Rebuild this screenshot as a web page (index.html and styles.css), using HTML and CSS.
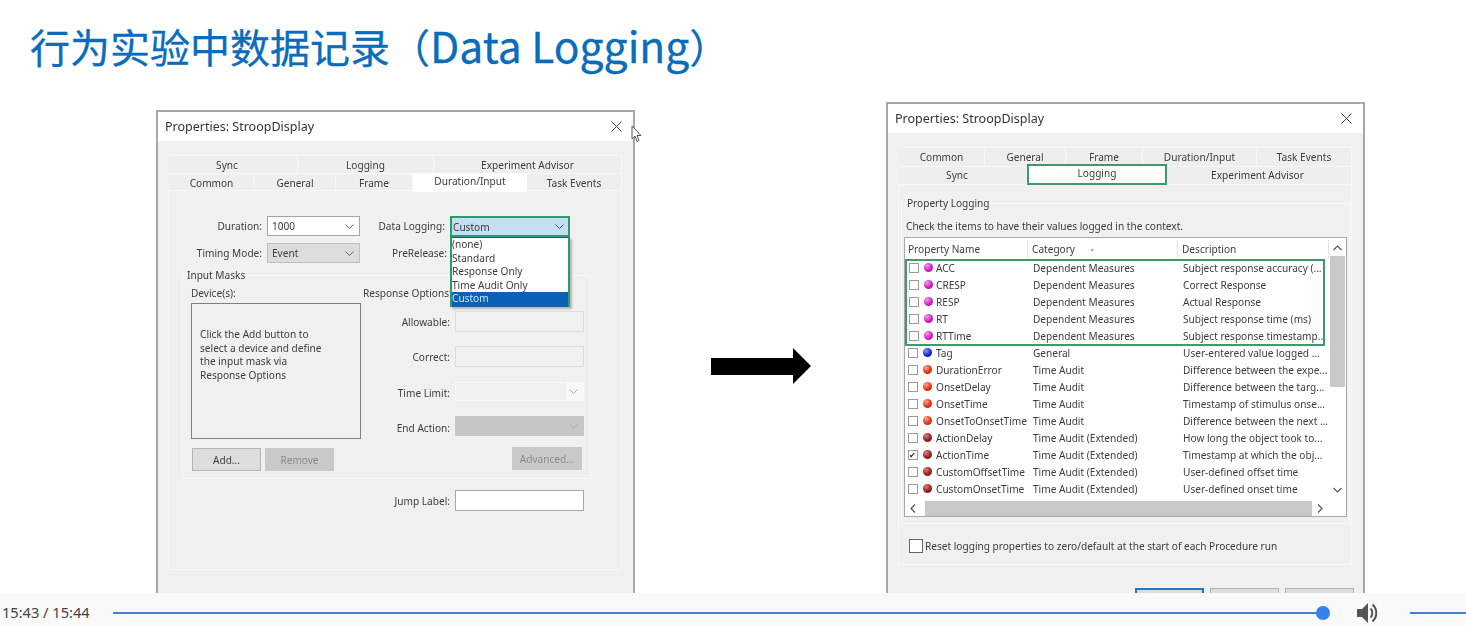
FILE: index.html
```html
<!DOCTYPE html>
<html lang="en">
<head>
  <meta charset="UTF-8">
  <title>Data Logging</title>
  <link rel="stylesheet" href="styles.css">
</head>
<body>
  <div class="slide">
    <h1 class="slide-title">行为实验中数据记录（<span class="title-latin">Data Logging</span>）</h1>

    <!-- left dialog: Duration/Input tab -->
    <div class="dialog dialog-left">
      <div class="dialog-title">
        <span>Properties: StroopDisplay</span>
        <svg class="close-icon" width="11" height="11" viewBox="0 0 11 11"><path d="M0.5 0.5L10.5 10.5M10.5 0.5L0.5 10.5" stroke="#444" fill="none"/></svg>
      </div>
      <div class="dialog-body">
        <div class="tabs">
          <div class="tab-row">
            <div class="tab w-sync">Sync</div>
            <div class="tab w-logging">Logging</div>
            <div class="tab w-advisor">Experiment Advisor</div>
          </div>
          <div class="tab-row">
            <div class="tab w-common">Common</div>
            <div class="tab w-general">General</div>
            <div class="tab w-frame">Frame</div>
            <div class="tab w-duration tab-active">Duration/Input</div>
            <div class="tab w-events">Task Events</div>
          </div>
        </div>
        <div class="panel panel-left">
          <div class="top-fields">
            <label>Duration:</label>
            <div class="select">1000<svg class="chev" width="9" height="5" viewBox="0 0 9 5"><path d="M0.5 0.5L4.5 4.5L8.5 0.5" stroke="#666" fill="none"/></svg></div>
            <label>Data Logging:</label>
            <div class="combo">
              <div class="select select-open">Custom<svg class="chev" width="9" height="5" viewBox="0 0 9 5"><path d="M0.5 0.5L4.5 4.5L8.5 0.5" stroke="#456" fill="none"/></svg></div>
              <ul class="combo-list">
                <li>(none)</li>
                <li>Standard</li>
                <li>Response Only</li>
                <li>Time Audit Only</li>
                <li class="picked">Custom</li>
              </ul>
            </div>
            <label>Timing Mode:</label>
            <div class="select select-gray">Event<svg class="chev" width="9" height="5" viewBox="0 0 9 5"><path d="M0.5 0.5L4.5 4.5L8.5 0.5" stroke="#666" fill="none"/></svg></div>
            <label class="label-pre">PreRelease:</label>
          </div>

          <fieldset class="masks">
            <legend>Input Masks</legend>
            <div class="masks-grid">
              <div class="devices">
                <div class="sub-label">Device(s):</div>
                <div class="device-box">Click the Add button to<br>select a device and define<br>the input mask via<br>Response Options</div>
                <div class="btn-row">
                  <button class="btn">Add...</button>
                  <button class="btn btn-off">Remove</button>
                </div>
              </div>
              <div class="options">
                <div class="sub-label">Response Options:</div>
                <div class="opt-row opt-allow"><label>Allowable:</label><div class="input input-off"></div></div>
                <div class="opt-row opt-correct"><label>Correct:</label><div class="input input-off"></div></div>
                <div class="opt-row opt-limit"><label>Time Limit:</label><div class="input input-limit"><svg class="chev" width="9" height="5" viewBox="0 0 9 5"><path d="M0.5 0.5L4.5 4.5L8.5 0.5" stroke="#aaa" fill="none"/></svg></div></div>
                <div class="opt-row opt-end"><label>End Action:</label><div class="input input-end"><svg class="chev" width="9" height="5" viewBox="0 0 9 5"><path d="M0.5 0.5L4.5 4.5L8.5 0.5" stroke="#aaa" fill="none"/></svg></div></div>
                <div class="adv-row"><button class="btn btn-off">Advanced...</button></div>
              </div>
            </div>
          </fieldset>

          <div class="jump-row">
            <label>Jump Label:</label>
            <div class="input input-jump"></div>
          </div>
        </div>
      </div>
    </div>

    <!-- mouse pointer next to the close button -->
    <svg class="pointer" width="11" height="18" viewBox="0 0 11 18"><path d="M1 1V14L4 11L6 16.5L8 15.5L6 10.5H10Z" fill="#fff" stroke="#555"/></svg>

    <svg class="arrow" width="100" height="36" viewBox="0 0 100 36"><polygon points="0,10 82,10 82,0 100,18 82,36 82,27 0,27" fill="#000"/></svg>

    <!-- right dialog: Logging tab -->
    <div class="dialog dialog-right">
      <div class="dialog-title">
        <span>Properties: StroopDisplay</span>
        <svg class="close-icon" width="11" height="11" viewBox="0 0 11 11"><path d="M0.5 0.5L10.5 10.5M10.5 0.5L0.5 10.5" stroke="#444" fill="none"/></svg>
      </div>
      <div class="dialog-body">
        <div class="tabs tabs-tall">
          <div class="tab-row">
            <div class="tab w-common">Common</div>
            <div class="tab w-general">General</div>
            <div class="tab w-frame">Frame</div>
            <div class="tab w-duration">Duration/Input</div>
            <div class="tab w-events">Task Events</div>
          </div>
          <div class="tab-row">
            <div class="tab w-sync">Sync</div>
            <div class="tab w-logging tab-marked">Logging</div>
            <div class="tab w-advisor">Experiment Advisor</div>
          </div>
        </div>
        <div class="panel panel-right">
          <fieldset class="prop-log">
            <legend>Property Logging</legend>
            <p class="prop-note">Check the items to have their values logged in the context.</p>
            <div class="list">
              <div class="list-main">
                <div class="list-left">
                  <div class="list-head">
                    <div class="col-name">Property Name</div>
                    <div class="col-cat">Category <span class="sort">▲</span></div>
                    <div class="col-desc">Description</div>
                  </div>
                  <div class="marked-rows">
                    <div class="row"><div class="marks"><i class="check"></i><i class="dot dot-dep"></i></div><div>ACC</div><div>Dependent Measures</div><div>Subject response accuracy (...</div></div>
                    <div class="row"><div class="marks"><i class="check"></i><i class="dot dot-dep"></i></div><div>CRESP</div><div>Dependent Measures</div><div>Correct Response</div></div>
                    <div class="row"><div class="marks"><i class="check"></i><i class="dot dot-dep"></i></div><div>RESP</div><div>Dependent Measures</div><div>Actual Response</div></div>
                    <div class="row"><div class="marks"><i class="check"></i><i class="dot dot-dep"></i></div><div>RT</div><div>Dependent Measures</div><div>Subject response time (ms)</div></div>
                    <div class="row"><div class="marks"><i class="check"></i><i class="dot dot-dep"></i></div><div>RTTime</div><div>Dependent Measures</div><div>Subject response timestamp...</div></div>
                  </div>
                  <div class="row"><div class="marks"><i class="check"></i><i class="dot dot-gen"></i></div><div>Tag</div><div>General</div><div>User-entered value logged ...</div></div>
                  <div class="row"><div class="marks"><i class="check"></i><i class="dot dot-time"></i></div><div>DurationError</div><div>Time Audit</div><div>Difference between the expe...</div></div>
                  <div class="row"><div class="marks"><i class="check"></i><i class="dot dot-time"></i></div><div>OnsetDelay</div><div>Time Audit</div><div>Difference between the targ...</div></div>
                  <div class="row"><div class="marks"><i class="check"></i><i class="dot dot-time"></i></div><div>OnsetTime</div><div>Time Audit</div><div>Timestamp of stimulus onse...</div></div>
                  <div class="row"><div class="marks"><i class="check"></i><i class="dot dot-time"></i></div><div>OnsetToOnsetTime</div><div>Time Audit</div><div>Difference between the next ...</div></div>
                  <div class="row"><div class="marks"><i class="check"></i><i class="dot dot-ext"></i></div><div>ActionDelay</div><div>Time Audit (Extended)</div><div>How long the object took to...</div></div>
                  <div class="row"><div class="marks"><i class="check checked">✔</i><i class="dot dot-ext"></i></div><div>ActionTime</div><div>Time Audit (Extended)</div><div>Timestamp at which the obj...</div></div>
                  <div class="row"><div class="marks"><i class="check"></i><i class="dot dot-ext"></i></div><div>CustomOffsetTime</div><div>Time Audit (Extended)</div><div>User-defined offset time</div></div>
                  <div class="row"><div class="marks"><i class="check"></i><i class="dot dot-ext"></i></div><div>CustomOnsetTime</div><div>Time Audit (Extended)</div><div>User-defined onset time</div></div>
                  <div class="row"><div class="marks"><i class="check"></i></div></div>
                </div>
                <div class="vscroll">
                  <svg width="9" height="6" viewBox="0 0 9 6"><path d="M0.5 5L4.5 1L8.5 5" stroke="#555" stroke-width="1.2" fill="none"/></svg>
                  <div class="vthumb"></div>
                  <svg class="scroll-down" width="9" height="6" viewBox="0 0 9 6"><path d="M0.5 1L4.5 5L8.5 1" stroke="#555" stroke-width="1.2" fill="none"/></svg>
                </div>
              </div>
              <div class="hscroll">
                <svg width="6" height="9" viewBox="0 0 6 9"><path d="M5 0.5L1 4.5L5 8.5" stroke="#555" stroke-width="1.2" fill="none"/></svg>
                <div class="hthumb"></div>
                <svg width="6" height="9" viewBox="0 0 6 9"><path d="M1 0.5L5 4.5L1 8.5" stroke="#555" stroke-width="1.2" fill="none"/></svg>
              </div>
            </div>
          </fieldset>
          <div class="reset-row">
            <i class="check check-big"></i>
            <span>Reset logging properties to zero/default at the start of each Procedure run</span>
          </div>
        </div>
        <div class="dialog-buttons">
          <button class="btn btn-main"></button>
          <button class="btn"></button>
          <button class="btn"></button>
        </div>
      </div>
    </div>
  </div>

  <div class="controls">
    <span class="time">15:43 / 15:44</span>
    <div class="progress"><div class="knob"></div></div>
    <svg class="speaker" width="24" height="24" viewBox="0 0 24 24">
      <path d="M1 8H6L12 2V22L6 16H1Z" fill="#555"/>
      <path d="M14.5 7.5C17 10 17 14 14.5 16.5" stroke="#555" stroke-width="2" fill="none"/>
      <path d="M16.5 3.5C21.5 8 21.5 16 16.5 20.5" stroke="#555" stroke-width="2" fill="none"/>
    </svg>
    <div class="volume"></div>
  </div>
</body>
</html>
```

FILE: styles.css
```css
body, h1, p, ul, fieldset, legend {
  margin: 0;
  padding: 0;
}

body {
  width: 1466px;
  height: 626px;
  overflow: hidden;
  background-color: #fff;
  font-family: "Noto Sans", "Open Sans", sans-serif;
  font-size: 10.1px;
  color: #3c3c3c;
}

.slide {
  position: relative;
  height: 593px;
  overflow: hidden;
  background-color: #fff;
}

.slide-title {
  padding: 18px 0 0 30px;
  font-family: "Noto Sans CJK SC", sans-serif;
  font-size: 40px;
  font-weight: 400;
  line-height: 54px;
  color: #0a6cbc;
  -webkit-text-stroke: 0.3px #0a6cbc;
}

.title-latin {
  font-size: 42.6px;
}

.pointer {
  position: absolute;
  left: 631px;
  top: 125px;
}

.arrow {
  position: absolute;
  left: 711px;
  top: 348px;
}

/* dialogs sit on the slide like pasted pictures */
.dialog {
  position: absolute;
  width: 479px;
  height: 520px;
  box-sizing: border-box;
  border: 2px solid #a8a8a8;
  border-bottom: none;
  background-color: #f0f0f0;
  filter: blur(0.3px);
}

.dialog-left {
  left: 156px;
  top: 110px;
}

.dialog-right {
  left: 886px;
  top: 102px;
}

.dialog-title {
  display: flex;
  align-items: center;
  justify-content: space-between;
  height: 29px;
  padding: 0 11px 0 7px;
  background-color: #fff;
  font-size: 12.5px;
  color: #333;
}

.dialog-body {
  padding: 14px 11px 0 11px;
}

.tab-row {
  display: flex;
  height: 17.5px;
}

.tabs-tall .tab-row {
  height: 18.5px;
}

.tab {
  display: flex;
  align-items: center;
  justify-content: center;
  box-sizing: border-box;
  padding-top: 2px;
  border-right: 1px solid #f7f7f7;
  border-top: 1px solid #f7f7f7;
  background-color: #eeeeee;
}

.tabs-tall .tab {
  padding-top: 0;
}

.w-sync { width: 129px; padding-right: 12px; }
.w-logging { width: 136px; }
.w-advisor { width: 188px; }
.w-common { width: 86px; }
.w-general { width: 81px; }
.w-frame { width: 77px; }
.w-duration { width: 114px; }
.w-events { width: 95px; }

.tab-active {
  height: 19px;
  padding: 0 0 3px;
  background-color: #fff;
  border: none;
}

.tabs-tall .tab-marked {
  width: 140px;
  height: 21px;
  margin: -2px -3px 0 -1px;
  padding-bottom: 3px;
  background-color: #fff;
  border: 2px solid #3f9a6a;
  position: relative;
}

.panel {
  box-sizing: border-box;
  margin-left: -1px;
  padding-left: 1px;
  border: 1px solid #f8f8f8;
  background-color: #f0f0f0;
}

.panel-left {
  height: 380px;
  padding-top: 25px;
}

.panel-right {
  height: 381px;
  padding-top: 11px;
}

label {
  text-align: right;
}

.top-fields {
  display: grid;
  grid-template-columns: 92px 93px 80px 120px;
  grid-auto-rows: 20px;
  column-gap: 5px;
  row-gap: 7px;
  align-items: center;
}

.label-pre {
  margin-right: -2px;
}

.select {
  display: flex;
  align-items: center;
  justify-content: space-between;
  box-sizing: border-box;
  height: 20px;
  padding: 0 5px 0 4px;
  border: 1px solid #a4a4a4;
  background-color: #fff;
}

.select-gray {
  border-color: #c0c0c0;
  background-color: #dcdcdc;
}

.select-open {
  height: 21px;
  border: 2px solid #2e9a6c;
  background-color: #c6def2;
  padding: 0 4px 0 1px;
}

.combo {
  position: relative;
  height: 20px;
}

.combo-list {
  position: absolute;
  left: 0;
  right: 0;
  top: 21px;
  z-index: 2;
  box-sizing: border-box;
  height: 70px;
  list-style: none;
  border: 2px solid #2e9a6c;
  border-top: 1px solid #1c5f8e;
  background-color: #fff;
  box-shadow: 2px 2px 2px rgba(0, 0, 0, 0.25);
  line-height: 13.6px;
}

.combo-list .picked {
  background-color: #0a62b8;
  color: #cfe4f5;
  height: 15px;
}

.masks {
  margin: 5px 30px 0 12px;
  border: 1px solid #f8f8f8;
}

.masks legend {
  margin-left: 4px;
  line-height: 14px;
}

.masks-grid {
  display: grid;
  grid-template-columns: 172px 1fr;
  padding: 4px 0 7px 8px;
}

.sub-label {
  height: 14px;
  line-height: 14px;
  white-space: nowrap;
}

.device-box {
  box-sizing: border-box;
  width: 170px;
  height: 136px;
  margin-top: 3px;
  padding: 24px 0 0 8px;
  border: 1px solid #808080;
  line-height: 13.7px;
}

.btn-row {
  display: flex;
  gap: 4px;
  margin: 9px 0 0 1px;
}

.btn {
  width: 69px;
  height: 23px;
  padding: 0;
  border: 1px solid #b4b4b4;
  background-color: #dddddd;
  font: inherit;
  color: #3c3c3c;
}

.btn-off {
  border-color: #c9c9c9;
  background-color: #c9c9c9;
  color: #8c8c8c;
}

.opt-row {
  display: grid;
  grid-template-columns: 87px 129px;
  column-gap: 5px;
  align-items: center;
}

.input {
  display: flex;
  align-items: center;
  justify-content: flex-end;
  box-sizing: border-box;
  height: 21px;
  padding-right: 5px;
  border: 1px solid #dcdcdc;
}

.opt-allow { margin-top: 11px; }
.opt-correct { margin-top: 14px; }
.opt-limit { margin-top: 15px; }
.opt-end { margin-top: 15px; }

.opt-correct label { padding-top: 1px; }
.opt-limit label, .opt-end label { padding-top: 3px; }

.input-limit {
  height: 19px;
  border-color: #f8f8f8;
  background: linear-gradient(90deg, #f0f0f0 110px, #f8f8f8 110px);
}

.input-end {
  height: 20px;
  border-color: #c6c6c6;
  background-color: #c6c6c6;
}

.adv-row {
  display: flex;
  justify-content: flex-end;
  margin-top: 11px;
  width: 219px;
}

.adv-row .btn {
  width: 70px;
}

.jump-row {
  display: grid;
  grid-template-columns: 280px 129px;
  column-gap: 5px;
  align-items: center;
  margin-top: 11px;
}

.input-jump {
  border: 1px solid #a8a8a8;
  background-color: #fff;
}

/* right dialog list */
.prop-log {
  margin: 0 1px 0 1px;
  height: 326px;
  border: 1px solid #f8f8f8;
}

.prop-log legend {
  margin-left: 5px;
  line-height: 14px;
}

.prop-note {
  margin: 9px 0 0 4px;
  line-height: 14px;
}

.list {
  box-sizing: border-box;
  width: 443px;
  height: 280px;
  margin: 4px 0 0 2px;
  border: 1px solid #a8a8a8;
  background-color: #fff;
}

.list-main {
  display: flex;
  height: 262px;
  overflow: hidden;
}

.list-left {
  width: 424px;
}

.list-head {
  display: grid;
  grid-template-columns: 123px 150px 1fr;
  height: 22px;
  align-items: center;
}

.col-name, .col-cat, .col-desc {
  height: 18px;
  line-height: 18px;
  padding-left: 4px;
  border-right: 1px solid #e4e4e4;
}

.col-name {
  padding-left: 3px;
}

.sort {
  margin-left: 12px;
  font-size: 5px;
  vertical-align: 2px;
  color: #999;
}

.marked-rows {
  width: 418px;
  margin-left: 1px;
  outline: 2px solid #3f9a6a;
  outline-offset: -1px;
}

.row {
  display: grid;
  grid-template-columns: 27px 97px 150px 1fr;
  height: 17px;
  line-height: 17px;
  padding-left: 3px;
  white-space: nowrap;
}

.row > div:first-child {
  padding-right: 0;
}

.marked-rows .row {
  grid-template-columns: 27px 97px 150px 1fr;
  padding-left: 3px;
}

.row:not(.marked-rows .row) {
  grid-template-columns: 28px 97px 150px 1fr;
}

.marks {
  display: flex;
  align-items: center;
  gap: 5px;
}

.check {
  display: block;
  box-sizing: border-box;
  width: 10px;
  height: 10px;
  margin-top: -2px;
  border: 1px solid #9a9a9a;
  background-color: #fff;
  font-style: normal;
  font-size: 8px;
  line-height: 8px;
  color: #222;
}

.check-big {
  width: 14px;
  height: 14px;
  margin: 0;
  border-color: #666;
}

.dot {
  display: block;
  width: 9px;
  height: 9px;
  margin-top: -3px;
  border-radius: 50%;
}

.dot-dep { background: radial-gradient(circle at 35% 30%, #f59ae8, #d21fc2 55%, #a01095); }
.dot-gen { background: radial-gradient(circle at 35% 30%, #8a9cf5, #1420d4 55%, #0c1290); }
.dot-time { background: radial-gradient(circle at 35% 30%, #f7a890, #e8320f 55%, #b02208); }
.dot-ext { background: radial-gradient(circle at 35% 30%, #d88080, #92221c 55%, #701510); }

.vscroll {
  display: flex;
  flex-direction: column;
  align-items: center;
  width: 17px;
  padding-top: 7px;
  box-sizing: border-box;
}

.vthumb {
  width: 15px;
  height: 131px;
  margin-top: 5px;
  background-color: #c8c8c8;
}

.scroll-down {
  margin-top: 100px;
}

.hscroll {
  display: flex;
  align-items: center;
  height: 16px;
  padding-left: 5px;
}

.hthumb {
  width: 387px;
  height: 15px;
  margin: 0 5px 0 9px;
  background-color: #c8c8c8;
}

.reset-row {
  display: flex;
  align-items: center;
  gap: 2px;
  margin: 15px 0 0 9px;
}

.dialog-buttons {
  display: flex;
  justify-content: flex-end;
  gap: 6px;
  margin: 23px -2px 0 0;
}

.btn-main {
  border: 2px solid #1d78c8;
}

/* video player bar */
.controls {
  display: flex;
  align-items: center;
  height: 33px;
  padding-top: 6px;
  box-sizing: border-box;
  background-color: #f9f9f9;
}

.time {
  width: 113px;
  padding: 0 0 2px 2px;
  box-sizing: border-box;
  font-family: "Noto Sans", sans-serif;
  font-size: 14.6px;
  color: #444;
}

.progress {
  position: relative;
  width: 1210px;
  height: 2px;
  background-color: #3f7fe0;
}

.knob {
  position: absolute;
  right: -7px;
  top: -6px;
  width: 14px;
  height: 14px;
  border-radius: 50%;
  background-color: #3680f0;
}

.speaker {
  margin-left: 33px;
}

.volume {
  width: 56px;
  height: 2px;
  margin-left: 30px;
  background-color: #3f7fe0;
}
```
